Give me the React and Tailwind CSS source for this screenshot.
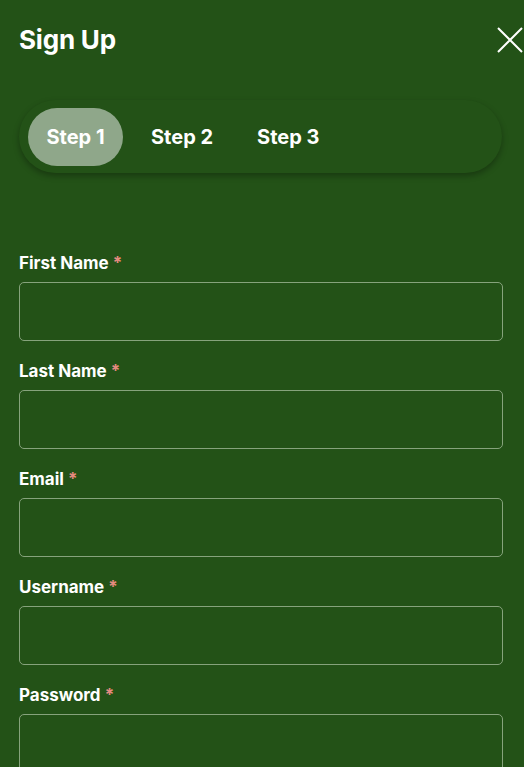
import React from 'react';

const fields = ['First Name', 'Last Name', 'Email', 'Username', 'Password'];

function Field({ label }) {
  return (
    <div className="flex flex-col">
      <label className="text-[17px] font-bold leading-[20px] text-white">
        {label} <span className="text-[#e58a80]">*</span>
      </label>
      <input
        type="text"
        className="mt-[9px] h-[59px] w-full rounded-[5px] border border-[#86a37c] bg-transparent px-3 text-white outline-none"
      />
    </div>
  );
}

export default function App() {
  return (
    <div className="min-h-screen w-[524px] overflow-hidden bg-[#235217] font-['Inter',sans-serif]">
      <div className="flex items-center justify-between pl-[19px] pt-[24px]">
        <h1 className="text-[26px] font-bold leading-[32px] tracking-[-0.2px] text-white">Sign Up</h1>
        <button className="mr-[1px] h-[26px] w-[26px] text-white" aria-label="Close">
          <svg viewBox="0 0 26 26" className="h-full w-full" fill="none" stroke="currentColor" strokeWidth="2">
            <path d="M1 1L25 25M25 1L1 25" />
          </svg>
        </button>
      </div>

      <div className="mx-[19px] mt-[44px] mr-[22px] flex h-[73px] items-center gap-[28px] rounded-full bg-[#235217] px-[9px] shadow-[0_3px_6px_rgba(0,0,0,0.3)]">
        <div className="flex h-[58px] w-[95px] items-center justify-center rounded-full bg-[#8fa78a] text-[20px] font-bold text-white">
          Step 1
        </div>
        <div className="text-[20px] font-bold text-white">Step 2</div>
        <div className="ml-[16px] text-[20px] font-bold text-white">Step 3</div>
      </div>

      <div className="mt-[80px] flex flex-col gap-[20px] pl-[19px] pr-[21px]">
        {fields.map(f => <Field key={f} label={f} />)}
      </div>
    </div>
  );
}
